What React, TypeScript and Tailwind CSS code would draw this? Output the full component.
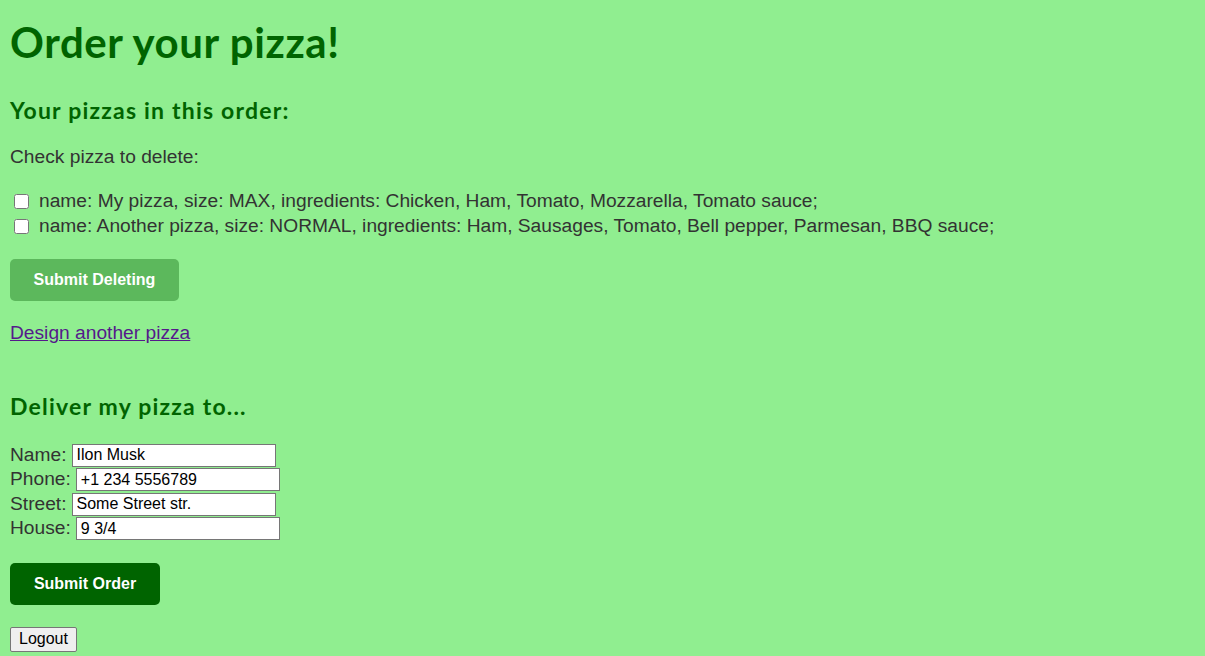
import React from "react";

const heading = { fontFamily: 'Lato, "Comic Sans MS", sans-serif' };

export default function App() {
  const rows = [
    "name: My pizza, size: MAX, ingredients: Chicken, Ham, Tomato, Mozzarella, Tomato sauce;",
    "name: Another pizza, size: NORMAL, ingredients: Ham, Sausages, Tomato, Bell pepper, Parmesan, BBQ sauce;",
  ];
  const fields = [
    { label: "Name:", value: "Ilon Musk" },
    { label: "Phone:", value: "+1 234 5556789" },
    { label: "Street:", value: "Some Street str." },
    { label: "House:", value: "9 3/4" },
  ];
  return (
    <div
      className="min-h-[656px] bg-[#90EE90] px-[10px] pb-[4px] text-[#333333] text-[19.2px]"
      style={{ fontFamily: '"Liberation Sans", Arial, sans-serif' }}
    >
      <h1 style={heading} className="pt-[19px] text-[42px] leading-[46px] font-bold text-[#006400] tracking-[0.6px]">
        Order your pizza!
      </h1>
      <h2 style={heading} className="mt-[32px] text-[23px] leading-[26px] font-bold text-[#006400] tracking-[1.2px]">
        Your pizzas in this order:
      </h2>
      <p className="mt-[22px] leading-[24px]">Check pizza to delete:</p>
      <div className="mt-[20px]">
        {rows.map((r) => (
          <div key={r} className="flex items-center h-[25px]">
            <input type="checkbox" className="w-[15px] h-[15px] ml-[4px] mr-[10px]" />
            <span>{r}</span>
          </div>
        ))}
      </div>
      <button className="mt-[20px] block bg-[#5CB85C] text-white font-bold text-[16px] leading-[20px] py-[11px] rounded-[5px] w-[169px] whitespace-nowrap">
        Submit Deleting
      </button>
      <a href="#" className="mt-[20px] inline-block leading-[24px] text-[#551A8B] underline">
        Design another pizza
      </a>
      <h2 style={heading} className="mt-[45px] text-[23px] leading-[26px] font-bold text-[#006400] tracking-[1.2px]">
        Deliver my pizza to...
      </h2>
      <div className="mt-[24px]">
        {fields.map((f) => (
          <div key={f.label} className="flex items-center h-[24.5px]">
            <span className="mr-[5px]">{f.label}</span>
            <input
              readOnly
              value={f.value}
              className="w-[204px] h-[23px] bg-white border border-[#767676] px-[4px] text-[16px] text-black"
            />
          </div>
        ))}
      </div>
      <button className="mt-[22px] block bg-[#006400] text-white font-bold text-[16px] leading-[20px] py-[11px] rounded-[5px] w-[150px] whitespace-nowrap">
        Submit Order
      </button>
      <button className="mt-[22px] block bg-[#EFEFEF] border border-[#767676] rounded-[2px] text-black text-[16px] leading-[20px] px-[8px] h-[25px]">
        Logout
      </button>
    </div>
  );
}
